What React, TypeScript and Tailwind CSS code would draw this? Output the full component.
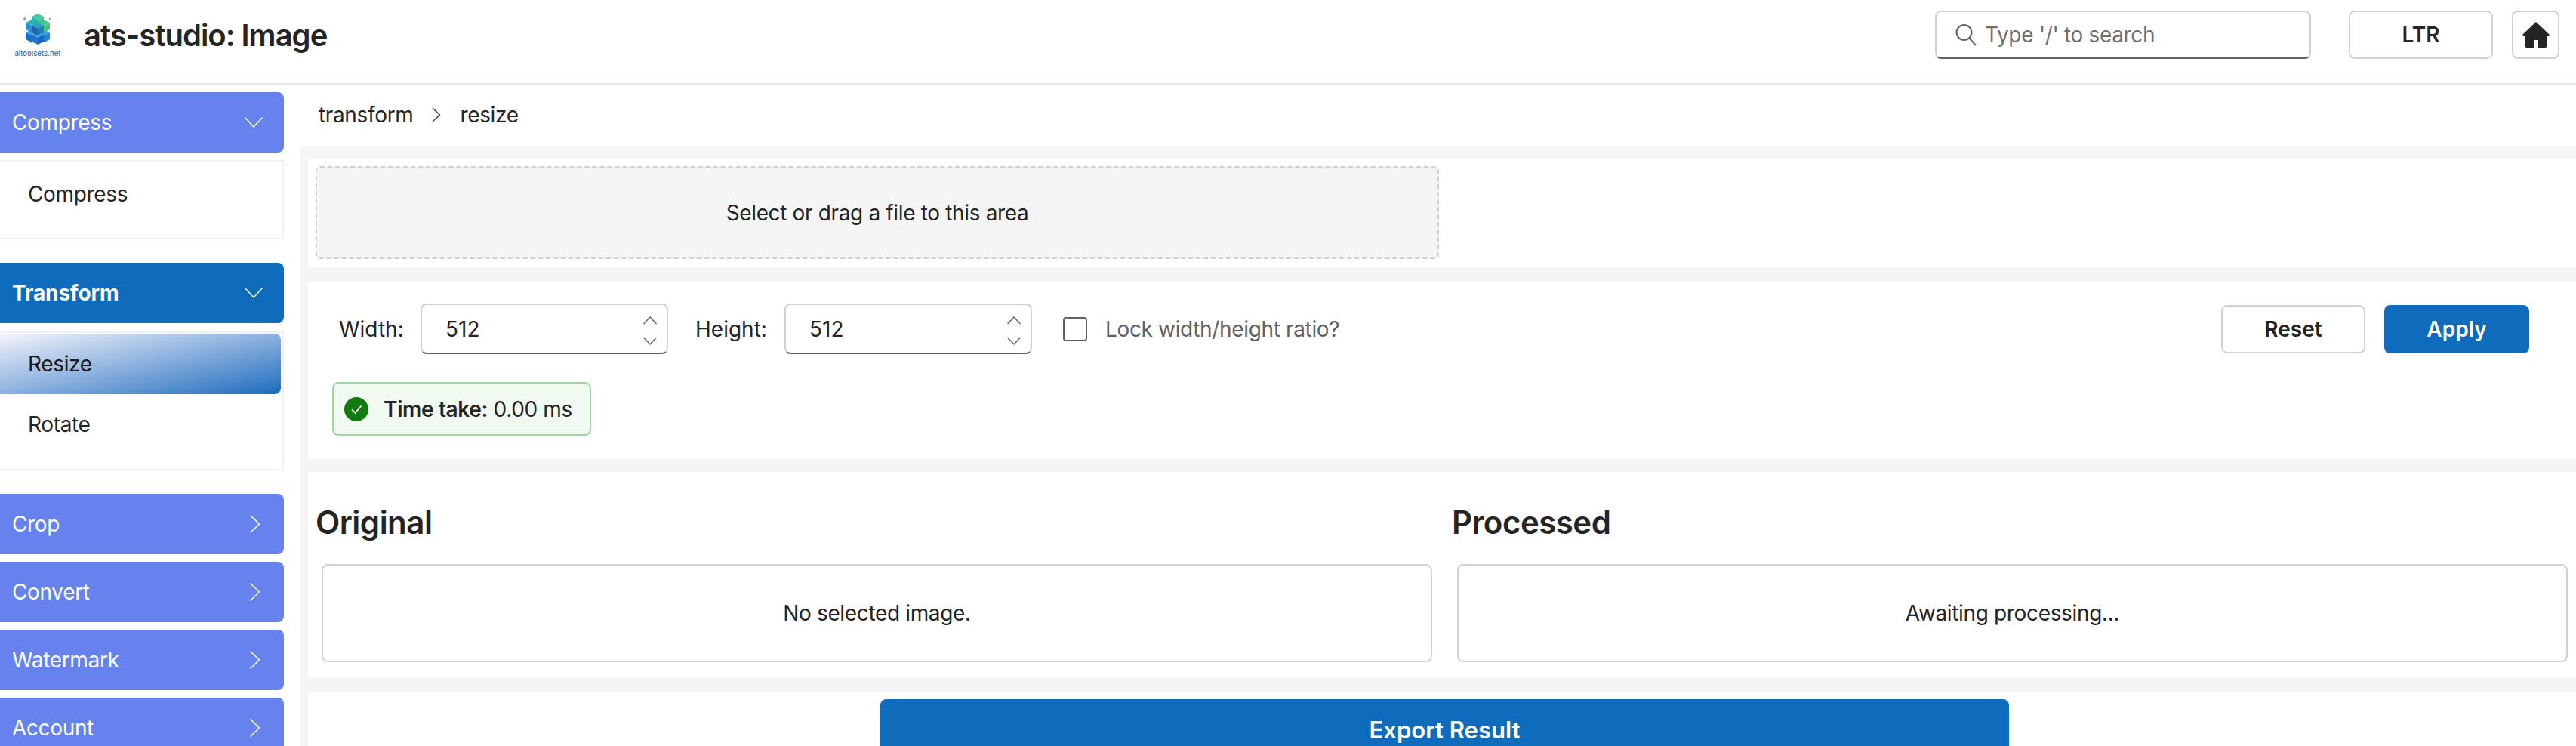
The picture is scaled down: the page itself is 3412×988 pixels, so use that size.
const FONT = "font-['Inter','Noto_Sans',sans-serif]"

function Cube({ x, y, top, left, right }: { x: number; y: number; top: string; left: string; right: string }) {
  return (
    <g transform={`translate(${x} ${y})`}>
      <polygon points="0,-6 8,-2 0,2 -8,-2" fill={top} />
      <polygon points="-8,-2 0,2 0,11 -8,7" fill={left} />
      <polygon points="8,-2 0,2 0,11 8,7" fill={right} />
    </g>
  )
}

function Logo() {
  return (
    <div className="flex flex-col items-center w-[64px] ml-[18px]">
      <svg width="40" height="42" viewBox="0 0 40 42">
        <circle cx="3" cy="8" r="2" fill="#7fa8e0" />
        <circle cx="36" cy="8" r="1.5" fill="#7cc98f" />
        <circle cx="32" cy="36" r="2" fill="none" stroke="#8fb0d8" strokeWidth="1" />
        <circle cx="11" cy="38" r="1.5" fill="#2f86d6" />
        <Cube x={12} y={28} top="#3f9fe6" left="#1b6fc4" right="#2485d8" />
        <Cube x={28} y={28} top="#3f9fe6" left="#1b6fc4" right="#2485d8" />
        <Cube x={20} y={31} top="#4aa8ea" left="#1f74c8" right="#1a66b8" />
        <Cube x={12} y={15} top="#2fb6b4" left="#2a8fd0" right="#2aa8a8" />
        <Cube x={28} y={15} top="#4ecb8a" left="#2fb4a0" right="#48c47c" />
        <Cube x={20} y={7} top="#45c9a0" left="#2bb3b0" right="#3cc58c" />
        <Cube x={20} y={19} top="#2c9fc8" left="#1e66a8" right="#1f7fc0" />
      </svg>
      <span className="mt-[6px] text-[9.5px] leading-[12px] font-medium tracking-normal text-[#2c6f9e] whitespace-nowrap">aitoolsets.net</span>
    </div>
  )
}

function NavHeader({ label, open, active }: { label: string; open?: boolean; active?: boolean }) {
  return (
    <div
      className={`shrink-0 flex items-center justify-between h-[80px] w-[376px] rounded-r-[8px] pl-[16px] text-white text-[28px] ${
        active ? 'bg-[#0f6cbd] font-bold tracking-[-0.1px]' : 'bg-[#6682ec]'
      }`}
    >
      <span>{label}</span>
      {open ? (
        <svg className="mr-[28px]" width="24" height="14" viewBox="0 0 24 14" fill="none" stroke="currentColor" strokeWidth="1.4">
          <path d="M0.5 0.5 L12 13 L23.5 0.5" />
        </svg>
      ) : (
        <svg className="mr-[32px]" width="13" height="24" viewBox="0 0 13 24" fill="none" stroke="currentColor" strokeWidth="1.4">
          <path d="M0.5 0.5 L12.5 12 L0.5 23.5" />
        </svg>
      )}
    </div>
  )
}

function NumberInput() {
  return (
    <div className="relative flex items-center w-[328px] h-[67px] pl-[31px] text-[28px] tracking-normal text-[#242424] border-2 border-[#d1d1d1] border-b-[#616161] rounded-[8px]">
      512
      <div className="absolute right-[12px] top-[12px] flex flex-col gap-[8px] text-[#616161]">
        <svg width="20" height="18" viewBox="0 0 20 18" fill="none" stroke="currentColor" strokeWidth="1.5">
          <path d="M1.5 13 L10 4 L18.5 13" />
        </svg>
        <svg width="20" height="18" viewBox="0 0 20 18" fill="none" stroke="currentColor" strokeWidth="1.5">
          <path d="M1.5 5 L10 14 L18.5 5" />
        </svg>
      </div>
    </div>
  )
}

export default function App() {
  return (
    <div className={`${FONT} h-screen overflow-hidden bg-white text-[#242424] tracking-[-0.35px] flex flex-col`}>
      {/* top bar */}
      <header className="h-[112px] shrink-0 flex items-start border-b-2 border-[#e5e5e5]">
        <div className="pt-[17px]">
          <Logo />
        </div>
        <h1 className="ml-[29px] mt-[21px] text-[40px] leading-[52px] font-semibold tracking-[-1px]">ats-studio: Image</h1>
        <div className="ml-auto mt-[14px] flex items-start">
          <div className="flex items-center w-[498px] h-[64px] pl-[24px] border-2 border-[#d1d1d1] border-b-[#616161] rounded-[8px] text-[28px] text-[#707070]">
            <svg width="30" height="30" viewBox="0 0 30 30" fill="none" stroke="#616161" strokeWidth="2">
              <circle cx="12.5" cy="12" r="10" />
              <path d="M19.5 19.5 L28 29" />
            </svg>
            <span className="ml-[10px]">Type '/' to search</span>
          </div>
          <button className="ml-[50px] w-[191px] h-[64px] border-2 border-[#d1d1d1] rounded-[8px] text-[28px] font-semibold tracking-normal">LTR</button>
          <button className="ml-[25px] mr-[22px] w-[63px] h-[64px] border-2 border-[#d1d1d1] rounded-[8px] flex items-center justify-center">
            <svg width="36" height="34" viewBox="0 0 36 34" fill="#242424">
              <path d="M18 0 L35.5 16.5 Q36.5 19 34 19 L32 19 L32 32.5 Q32 34 30.5 34 L21 34 L21 24 L15 24 L15 34 L5.5 34 Q4 34 4 32.5 L4 19 L2 19 Q-0.5 19 0.5 16.5 Z" />
            </svg>
          </button>
        </div>
      </header>

      <div className="flex-1 flex min-h-0">
        {/* sidebar */}
        <aside className="w-[398px] shrink-0 pt-[10px] flex flex-col">
          <NavHeader label="Compress" open />
          <div className="shrink-0 mt-[10px] w-[376px] h-[105px] border-y-2 border-r-2 border-[#f0f0fa] flex items-start pl-[37px] pt-[25px] text-[28px] leading-[36px]">
            Compress
          </div>
          <div className="shrink-0 mt-[31px]">
            <NavHeader label="Transform" open active />
          </div>
          <div className="shrink-0 mt-[11px] w-[376px] h-[184px] border-y-2 border-r-2 border-[#f0f0fa] pt-[1px] text-[28px]">
            <div className="w-[372px] h-[80px] rounded-r-[8px] flex items-center pl-[37px] text-[#1a1a1a] bg-linear-to-br from-[#f4f4fa] to-[#0f6cbd]">
              Resize
            </div>
            <div className="h-[80px] flex items-center pl-[37px]">Rotate</div>
          </div>
          <div className="shrink-0 mt-[31px] flex flex-col gap-[10px]">
            <NavHeader label="Crop" />
            <NavHeader label="Convert" />
            <NavHeader label="Watermark" />
            <NavHeader label="Account" />
          </div>
        </aside>

        <main className="flex-1 min-w-0 flex flex-col">
          <div className="h-[82px] shrink-0 flex items-center pl-[24px] pb-[2px] text-[28px] gap-[17px]">
            <span>transform</span>
            <span className="w-[28px] flex justify-center">
              <svg width="12" height="20" viewBox="0 0 12 20" fill="none" stroke="#424242" strokeWidth="1.6">
                <path d="M1 1 L10.5 10 L1 19" />
              </svg>
            </span>
            <span>resize</span>
          </div>

          <div className="flex-1 min-h-0 bg-[#f5f5f5] pl-[10px] pt-[16px] flex flex-col">
            {/* file picker */}
            <section className="h-[144px] shrink-0 bg-white pl-[10px] pt-[10px]">
              <div className="w-[1488px] h-[123px] border-2 border-dashed border-[#d1d1d1] rounded-[6px] bg-[#f5f5f5] flex items-center justify-center text-[28px]">
                Select or drag a file to this area
              </div>
            </section>

            {/* options */}
            <section className="mt-[19px] h-[233px] shrink-0 bg-white pt-[29px]">
              <div className="flex items-center h-[67px] pl-[41px] pr-[62px] text-[28px]">
                <span className="w-[108px] tracking-normal">Width:</span>
                <NumberInput />
                <span className="ml-[36px] w-[118px] tracking-normal">Height:</span>
                <NumberInput />
                <span className="ml-[41px] w-[32px] h-[32px] border-2 border-[#616161] rounded-[4px]"></span>
                <span className="ml-[24px] text-[#616161]">Lock width/height ratio?</span>
                <button className="ml-auto w-[191px] h-[64px] border-2 border-[#d1d1d1] rounded-[8px] font-semibold tracking-normal">Reset</button>
                <button className="ml-[25px] w-[192px] h-[64px] bg-[#0f6cbd] rounded-[8px] text-white font-semibold tracking-normal">Apply</button>
              </div>
              <div className="ml-[32px] mt-[37px] w-[343px] h-[71px] flex items-center pl-[14px] bg-[#f1faf1] border-2 border-[#9fd89f] rounded-[8px] text-[28px]">
                <svg width="32" height="32" viewBox="0 0 32 32">
                  <circle cx="16" cy="16" r="16" fill="#107c10" />
                  <path d="M10 16.5 L14.5 21 L22.5 11.5" fill="none" stroke="white" strokeWidth="1.8" />
                </svg>
                <span className="ml-[20px]">
                  <span className="font-semibold">Time take:</span> 0.00 ms
                </span>
              </div>
            </section>

            {/* previews */}
            <section className="mt-[19px] h-[271px] shrink-0 bg-white grid grid-cols-2 pt-[39px]">
              <div className="pl-[10px]">
                <h2 className="h-[56px] text-[42px] leading-[56px] font-semibold tracking-[-0.5px]">Original</h2>
                <div className="mt-[27px] ml-[8px] mr-[13px] h-[130px] border-2 border-[#d1d1d1] rounded-[8px] flex items-center justify-center text-[28px]">
                  No selected image.
                </div>
              </div>
              <div className="pl-[13px]">
                <h2 className="h-[56px] text-[42px] leading-[56px] font-semibold tracking-[-0.5px]">Processed</h2>
                <div className="mt-[27px] ml-[7px] mr-[11px] h-[130px] border-2 border-[#d1d1d1] rounded-[8px] flex items-center justify-center text-[28px]">
                  Awaiting processing...
                </div>
              </div>
            </section>

            {/* export */}
            <section className="mt-[20px] flex-1 bg-white pt-[10px] pl-[758px]">
              <button className="w-[1495px] h-[84px] pb-[2px] bg-[#0f6cbd] rounded-[8px] text-white text-[31px] font-semibold tracking-normal">Export Result</button>
            </section>
          </div>
        </main>
      </div>
    </div>
  )
}
